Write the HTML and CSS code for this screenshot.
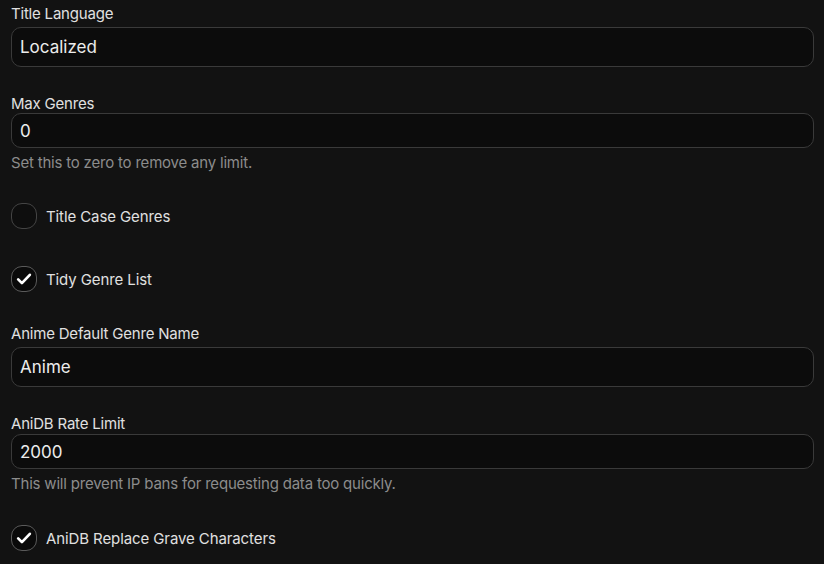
FILE: index.html
```html
<!DOCTYPE html>
<html lang="en">
<head>
  <meta charset="UTF-8" />
  <meta name="viewport" content="width=device-width, initial-scale=1.0"/>
  <title>Metadata Settings</title>
  <link rel="stylesheet" href="styles.css">
</head>
<body>
  <form class="settings">
    <div class="field field-tall">
      <label>Title Language</label>
      <input type="text" value="Localized"/>
    </div>

    <div class="field">
      <label>Max Genres</label>
      <input type="text" value="0"/>
      <p class="hint">Set this to zero to remove any limit.</p>
    </div>

    <div class="check">
      <span class="box"></span>
      <span>Title Case Genres</span>
    </div>

    <div class="check check-2">
      <span class="box on">
        <svg viewBox="0 0 24 24" width="20" height="20"><path d="M5 12.5l4.5 4.5L19 7" fill="none" stroke="#fff" stroke-width="3.2" stroke-linecap="round" stroke-linejoin="round"/></svg>
      </span>
      <span>Tidy Genre List</span>
    </div>

    <div class="field field-tall after-check">
      <label>Anime Default Genre Name</label>
      <input type="text" value="Anime"/>
    </div>

    <div class="field field-low">
      <label>AniDB Rate Limit</label>
      <input type="text" value="2000"/>
      <p class="hint">This will prevent IP bans for requesting data too quickly.</p>
    </div>

    <div class="check check-last">
      <span class="box on">
        <svg viewBox="0 0 24 24" width="20" height="20"><path d="M5 12.5l4.5 4.5L19 7" fill="none" stroke="#fff" stroke-width="3.2" stroke-linecap="round" stroke-linejoin="round"/></svg>
      </span>
      <span>AniDB Replace Grave Characters</span>
    </div>
  </form>
</body>
</html>
```

FILE: styles.css
```css
*{margin:0;padding:0;box-sizing:border-box;font-family:'Inter',sans-serif;}
body{background:#121212;color:#e2e2e2;padding:5px 10px 0 11px;}
.settings{display:flex;flex-direction:column;}
.field{margin-top:28px;}
.field:first-child{margin-top:0;}
.field label{display:block;font-size:15px;line-height:18px;color:#e0e0e0;letter-spacing:-0.2px;}
.field input{display:block;width:100%;height:35px;margin-top:0;padding:0 8px;background:#0c0c0c;border:1px solid #3a3a3a;border-radius:10px;color:#ececec;font-size:17px;outline:none;}
.field-tall label{margin-bottom:4px;}
.field-tall input{height:40px;}
.field-low label{margin-bottom:1px;}
.after-check{margin-top:33px;}
.hint{margin-top:6px;font-size:15px;line-height:18px;color:#8c8c8c;letter-spacing:-0.2px;}
.check{display:flex;align-items:center;gap:9px;margin-top:31px;font-size:15px;color:#e0e0e0;letter-spacing:-0.1px;}
.check-2{margin-top:37px;}
.check-last{margin-top:32px;}
.box{width:26px;height:26px;border:1px solid #444;border-radius:11px;background:#0e0e0e;display:flex;align-items:center;justify-content:center;}
.box.on{background:#0a0a0a;border-color:#5a5a5a;}
```
